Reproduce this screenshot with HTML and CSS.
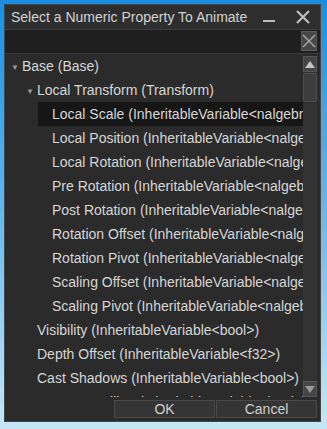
FILE: index.html
```html
<!DOCTYPE html>
<html lang="en">
<head>
    <meta charset="UTF-8">
    <title>Select a Numeric Property To Animate</title>
    <link rel="stylesheet" href="styles.css">
</head>
<body>
    <div class="window">
        <div class="titlebar">
            <span class="title">Select a Numeric Property To Animate</span>
            <span class="minimize"></span>
            <svg class="close" width="16" height="16" viewBox="0 0 16 16">
                <path d="M2 2 L14 14 M14 2 L2 14" stroke="#bdbdbd" stroke-width="2.2"/>
            </svg>
        </div>
        <div class="search">
            <div class="search-input"></div>
            <button class="clear">
                <svg width="14" height="14" viewBox="0 0 14 14">
                    <path d="M1 1 L13 13 M13 1 L1 13" stroke="#a8a8a8" stroke-width="1.4"/>
                </svg>
            </button>
        </div>
        <div class="list-area">
            <div class="tree">
                <div class="row level0"><span class="arrow">&#9660;</span>Base (Base)</div>
                <div class="row level1"><span class="arrow">&#9660;</span>Local Transform (Transform)</div>
                <div class="row level2 selected">Local Scale (InheritableVariable&lt;nalgebra::Vector3&lt;f32&gt;&gt;)</div>
                <div class="row level2">Local Position (InheritableVariable&lt;nalgebra::Vector3&lt;f32&gt;&gt;)</div>
                <div class="row level2">Local Rotation (InheritableVariable&lt;nalgebra::UnitQuaternion&gt;)</div>
                <div class="row level2">Pre Rotation (InheritableVariable&lt;nalgebra::UnitQuaternion&gt;)</div>
                <div class="row level2">Post Rotation (InheritableVariable&lt;nalgebra::UnitQuaternion&gt;)</div>
                <div class="row level2">Rotation Offset (InheritableVariable&lt;nalgebra::Vector3&lt;f32&gt;&gt;)</div>
                <div class="row level2">Rotation Pivot (InheritableVariable&lt;nalgebra::Vector3&lt;f32&gt;&gt;)</div>
                <div class="row level2">Scaling Offset (InheritableVariable&lt;nalgebra::Vector3&lt;f32&gt;&gt;)</div>
                <div class="row level2">Scaling Pivot (InheritableVariable&lt;nalgebra::Vector3&lt;f32&gt;&gt;)</div>
                <div class="row level1 leaf">Visibility (InheritableVariable&lt;bool&gt;)</div>
                <div class="row level1 leaf">Depth Offset (InheritableVariable&lt;f32&gt;)</div>
                <div class="row level1 leaf">Cast Shadows (InheritableVariable&lt;bool&gt;)</div>
                <div class="row level1 leaf">Frustum Culling (InheritableVariable&lt;bool&gt;)</div>
            </div>
            <div class="scrollbar">
                <div class="scroll-btn"><span class="tri up"></span></div>
                <div class="track"><div class="thumb"></div></div>
                <div class="scroll-btn"><span class="tri down"></span></div>
            </div>
        </div>
        <div class="buttons">
            <button class="btn">OK</button>
            <button class="btn">Cancel</button>
        </div>
    </div>
</body>
</html>
```

FILE: styles.css
```css
html, body {
    height: 100%;
}
body {
    margin: 0;
    padding: 4px 6px 7px 4px;
    box-sizing: border-box;
    background: linear-gradient(to bottom, #1b8ee2 0%, #5fb4ea 45%, #c6e8f6 100%);
    font-family: "Liberation Sans", Arial, sans-serif;
    font-size: 14px;
    color: #d6d6d6;
}
.window {
    height: 100%;
    display: flex;
    flex-direction: column;
    background-color: #2b2b2b;
    border: 1px solid #454545;
    box-sizing: border-box;
}
.titlebar {
    height: 24px;
    display: flex;
    align-items: center;
    padding: 0 9px 0 6px;
    background-color: #2e2e2e;
    border-bottom: 1px solid #3d3d3d;
}
.title {
    flex: 1;
    color: #d2d2d2;
    white-space: nowrap;
}
.minimize {
    width: 12px;
    height: 2px;
    background-color: #bdbdbd;
    margin: 8px 20px 0 0;
}
.close {
    display: block;
}
.search {
    height: 22px;
    display: flex;
    background-color: #1f1f1f;
    border-bottom: 1px solid #3a3a3a;
    padding: 1px 3px 0 0;
}
.search-input {
    flex: 1;
}
.clear {
    width: 16px;
    height: 20px;
    padding: 0;
    border: 1px solid #5a5a5a;
    background-color: #474747;
    display: flex;
    align-items: center;
    justify-content: center;
}
.clear svg {
    display: block;
}
.list-area {
    flex: 1;
    display: flex;
    min-height: 0;
    padding: 0 3px 1px 0;
    background-color: #2b2b2b;
}
.tree {
    flex: 1;
    overflow: hidden;
}
.row {
    height: 24px;
    line-height: 24px;
    white-space: nowrap;
    overflow: hidden;
}
.level0 {
    padding-left: 6px;
}
.level1 {
    padding-left: 21px;
}
.level1.leaf {
    padding-left: 32px;
}
.level2 {
    padding-left: 47px;
}
.selected {
    background-color: #161616;
    margin-left: 33px;
    padding-left: 14px;
}
.arrow {
    display: inline-block;
    width: 11px;
    font-size: 8px;
    color: #9a9a9a;
    vertical-align: 1px;
}
.scrollbar {
    width: 14px;
    display: flex;
    flex-direction: column;
    padding-top: 2px;
}
.scroll-btn {
    height: 16px;
    border: 1px solid #555555;
    background-color: #454545;
    box-sizing: border-box;
    display: flex;
    align-items: center;
    justify-content: center;
}
.tri {
    width: 0;
    height: 0;
    border-left: 5px solid transparent;
    border-right: 5px solid transparent;
}
.tri.up {
    border-bottom: 7px solid #c4c4c4;
}
.tri.down {
    border-top: 7px solid #9a9a9a;
}
.track {
    flex: 1;
    background-color: #333333;
}
.thumb {
    height: 27px;
    margin-top: 1px;
    background-color: #3d3d3d;
    border: 1px solid #4e4e4e;
    border-radius: 2px;
}
.buttons {
    height: 23px;
    display: flex;
    justify-content: flex-end;
    gap: 1px;
    padding: 2px 3px 0 0;
    box-sizing: border-box;
    background-color: #2b2b2b;
}
.btn {
    width: 101px;
    height: 18px;
    padding: 0;
    border: 1px solid #4a4a4a;
    background-color: #353535;
    color: #cfcfcf;
    font-family: "Liberation Sans", Arial, sans-serif;
    font-size: 14px;
    line-height: normal;
}
```
